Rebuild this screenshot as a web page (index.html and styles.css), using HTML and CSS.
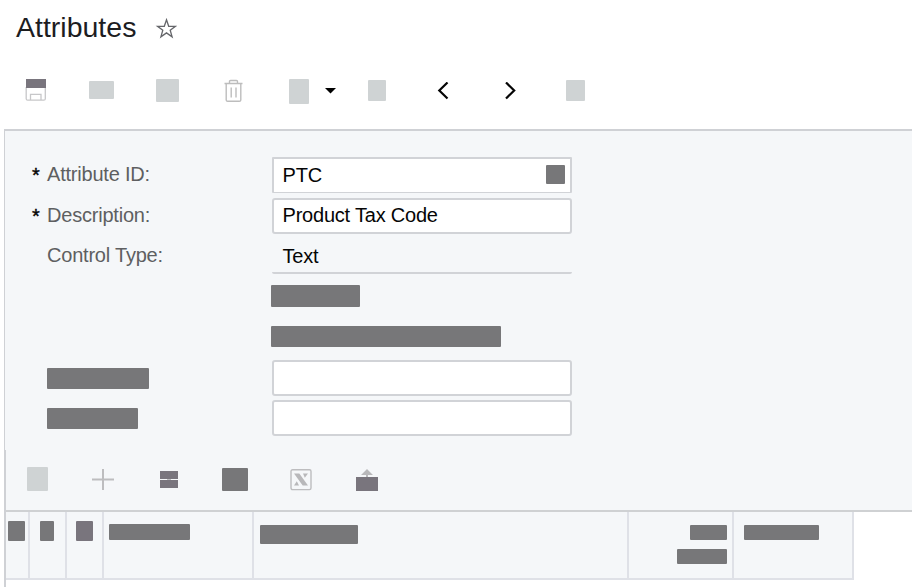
FILE: index.html
```
<!DOCTYPE html>
<html lang="en">
<head>
<meta charset="utf-8">
<title>Attributes</title>
<link rel="stylesheet" href="styles.css">
</head>
<body>
<header class="title-bar">
  <h1>Attributes</h1>
  <svg class="star" width="22" height="22" viewBox="0 0 22 22"><path d="M11.5 1.8 13.7 8.3H20.4L15.2 12.2 17.1 18.9 11.5 14.9 5.9 18.9 7.8 12.2 2.6 8.3H9.3Z" fill="none" stroke="#65666a" stroke-width="1.3"/></svg>
</header>
<nav class="toolbar">
  <svg class="save" width="22" height="22" viewBox="0 0 22 22"><path d="M1.2 8V19.7Q1.2 21.2 2.7 21.2H18.8Q20.3 21.2 20.3 19.7V8M5.5 21V15.3H16V21" fill="none" stroke="#c7c7c9" stroke-width="1.3"/><path d="M1 0H21V9H1Z" fill="#79757d"/></svg>
  <i class="block pale back"></i>
  <i class="block pale undo"></i>
  <svg class="trash" width="20" height="24" viewBox="0 0 20 24"><path d="M.5 4.5H18.5M5.5 4V2.5Q5.5 1.5 6.5 1.5H12.5Q13.5 1.5 13.5 2.5V4M2.2 5V21Q2.2 22.3 3.7 22.3H15.3Q16.8 22.3 16.8 21V5M7.2 8.5V18.5M12 8.5V18.5" fill="none" stroke="#bdbdbd" stroke-width="1.4"/></svg>
  <i class="block pale copy"></i>
  <svg class="caret" width="12" height="6" viewBox="0 0 12 6"><path d="M0 0H11L5.5 5.5Z"/></svg>
  <i class="block pale first"></i>
  <svg class="prev" width="12" height="18" viewBox="0 0 12 18"><path d="M10.5.5 2.3 8.5 10.5 16.5" fill="none" stroke="#050505" stroke-width="2.2"/></svg>
  <svg class="next" width="12" height="18" viewBox="0 0 12 18"><path d="M2 .5 10.2 8.5 2 16.5" fill="none" stroke="#050505" stroke-width="2.2"/></svg>
  <i class="block pale last"></i>
</nav>
<main class="panel">
  <form class="form">
    <div class="row id-row"><span class="star-mark">*</span><span class="label">Attribute ID:</span><div class="field lookup"><span>PTC</span><i class="block dark lookup-button"></i></div></div>
    <div class="row description-row"><span class="star-mark">*</span><span class="label">Description:</span><div class="field"><span>Product Tax Code</span></div></div>
    <div class="row type-row"><span class="star-mark"></span><span class="label">Control Type:</span><div class="readonly"><span>Text</span></div></div>
    <i class="block dark check-one"></i>
    <i class="block dark check-two"></i>
    <div class="row mask-row"><span class="star-mark"></span><span class="label"><i class="block dark mask-label"></i></span><div class="field"></div></div>
    <div class="row regexp-row"><span class="star-mark"></span><span class="label"><i class="block dark regexp-label"></i></span><div class="field"></div></div>
  </form>
  <section class="details">
    <div class="grid-toolbar">
      <i class="block pale refresh"></i>
      <svg class="plus" width="22" height="22" viewBox="0 0 22 22"><path d="M11 0V21M0 10.5H22" fill="none" stroke="#bdbdbf" stroke-width="2"/></svg>
      <svg class="rows" width="18" height="17" viewBox="0 0 18 17"><path d="M0 0H18V8H0ZM0 9H18V17H0Z" fill="#79757d"/><path d="M7 8H11V9H7Z" fill="#bdbdbf"/></svg>
      <i class="block dark fit"></i>
      <svg class="excel" width="22" height="22" viewBox="0 0 22 22"><rect x="1" y=".8" width="20" height="19.8" rx="1.5" fill="none" stroke="#bdbdbf" stroke-width="1.4"/><path d="M4 4.5H9.3L18 16.5H12.7ZM13 4.5H18L14.8 8.7ZM4 16.5H9L6.8 12.3Z" fill="#b8b8ba"/></svg>
      <svg class="upload" width="22" height="22" viewBox="0 0 22 22"><path d="M11 0 17 6H12V9H10V6H5Z" fill="#b8b8ba"/><path d="M0 8H22V22H0Z" fill="#79757d"/></svg>
    </div>
    <div class="grid-head">
      <div class="cell files"><i class="block dark"></i></div>
      <div class="cell notes"><i class="block dark"></i></div>
      <div class="cell attach"><i class="block violet"></i></div>
      <div class="cell value"><i class="block dark"></i></div>
      <div class="cell description"><i class="block dark"></i></div>
      <div class="cell order"><i class="block dark"></i><i class="block dark second"></i></div>
      <div class="cell disabled"><i class="block dark"></i></div>
    </div>
  </section>
</main>
</body>
</html>
```
FILE: styles.css
```
* { box-sizing: border-box; }
body {
  margin: 0;
  height: 587px;
  overflow: hidden;
  background: #fff;
  color: #050505;
  font: 20px/24px "Liberation Sans", Arial, sans-serif;
  letter-spacing: -0.21px;
}
svg { display: block; flex: none; }
.block { display: block; flex: none; border-radius: 1px; }
.pale { background: #cfd3d4; }
.dark { background: #777779; }
.violet { background: #79757d; }

.title-bar { display: flex; height: 62px; padding-left: 16px; }
h1 { margin: 11px 0 0; width: 120px; font-size: 28.5px; line-height: 32px; font-weight: 400; letter-spacing: 0; color: #1d1d1f; white-space: nowrap; }
.star { margin: 18px 0 0 19px; }

.toolbar { display: flex; align-items: flex-start; height: 67px; padding: 17px 0 0 25px; }
.back { width: 25px; height: 18px; margin: 2px 0 0 42px; }
.undo { width: 23px; height: 23px; margin-left: 42px; }
.trash { margin-left: 45px; }
.copy { width: 20px; height: 25px; margin-left: 45px; }
.caret { margin: 9px 0 0 16px; }
.first { width: 18px; height: 21px; margin: 1px 0 0 31px; }
.prev { margin: 3px 0 0 51px; }
.next { margin: 3px 0 0 55px; }
.last { width: 19px; height: 21px; margin: 1px 0 0 50px; }

.panel { margin-left: 4px; border-top: 2px solid #cfd1d5; }
.form {
  display: flex;
  flex-direction: column;
  height: 319px;
  padding: 26px 0 0 27px;
  border-left: 1px solid #cfd1d5;
  background: #f5f7f9;
}
.row { display: flex; flex: none; height: 36px; }
.star-mark { width: 15px; padding-top: 6px; -webkit-text-stroke: 0.4px #050505; }
.label { width: 225px; padding-top: 5px; color: #5e5f61; white-space: nowrap; }
.field {
  display: flex;
  justify-content: space-between;
  width: 300px;
  padding: 3px 5px 0 8.5px;
  border: 2px solid #d1d3d7;
  border-radius: 3px;
  background: #fff;
}
.lookup { padding-top: 4px; border-radius: 1px; border-bottom-width: 1px; }
.lookup-button { width: 19px; height: 19px; margin-top: 2px; }
.description-row { margin-top: 5px; }
.type-row { height: 35px; margin-top: 5px; }
.type-row .label { padding-top: 4px; }
.readonly { width: 300px; padding: 5px 0 0 10.5px; border-bottom: 2px solid #d1d3d7; border-radius: 2px; }
.check-one { width: 89px; height: 22px; margin: 11px 0 0 239px; }
.check-two { width: 230px; height: 21px; margin: 19px 0 0 239px; }
.mask-row { margin-top: 13px; }
.regexp-row { margin-top: 4px; }
.mask-label { width: 102px; height: 21px; margin-top: 3px; }
.regexp-label { width: 91px; height: 21px; margin-top: 3px; }

.details { height: 137px; border-left: 2px solid #cfd1d5; }
.grid-toolbar {
  display: flex;
  align-items: flex-start;
  height: 62px;
  padding: 17px 0 0 21px;
  border-bottom: 2px solid #cfd1d3;
  background: #f5f7f9;
}
.refresh { width: 21px; height: 24px; }
.plus { margin: 2px 0 0 44px; }
.rows { margin: 4px 0 0 46px; }
.fit { width: 26px; height: 23px; margin: 1px 0 0 44px; }
.excel { margin: 2px 0 0 42px; }
.upload { margin: 2px 0 0 44px; }

.grid-head { display: flex; width: 848px; height: 68px; }
.cell { flex: none; border-right: 2px solid #dfe1e7; border-bottom: 2px solid #dfe1e7; background: #f5f7f9; }
.files { width: 24px; padding: 9px 0 0 2px; }
.files .block { width: 17px; height: 20px; }
.notes { width: 37px; padding: 9px 0 0 10px; }
.notes .block { width: 14px; height: 20px; }
.attach { width: 37px; padding: 9px 0 0 9px; }
.attach .block { width: 17px; height: 20px; }
.value { width: 150px; padding: 12px 0 0 5px; }
.value .block { width: 81px; height: 16px; }
.description { width: 375px; padding: 13px 0 0 6px; }
.description .block { width: 98px; height: 19px; }
.order { display: flex; flex-direction: column; align-items: flex-end; gap: 9px; width: 105px; padding: 13px 5px 0 0; }
.order .block { width: 37px; height: 15px; }
.order .second { width: 50px; }
.disabled { width: 120px; padding: 13px 0 0 10px; }
.disabled .block { width: 75px; height: 15px; }
```
